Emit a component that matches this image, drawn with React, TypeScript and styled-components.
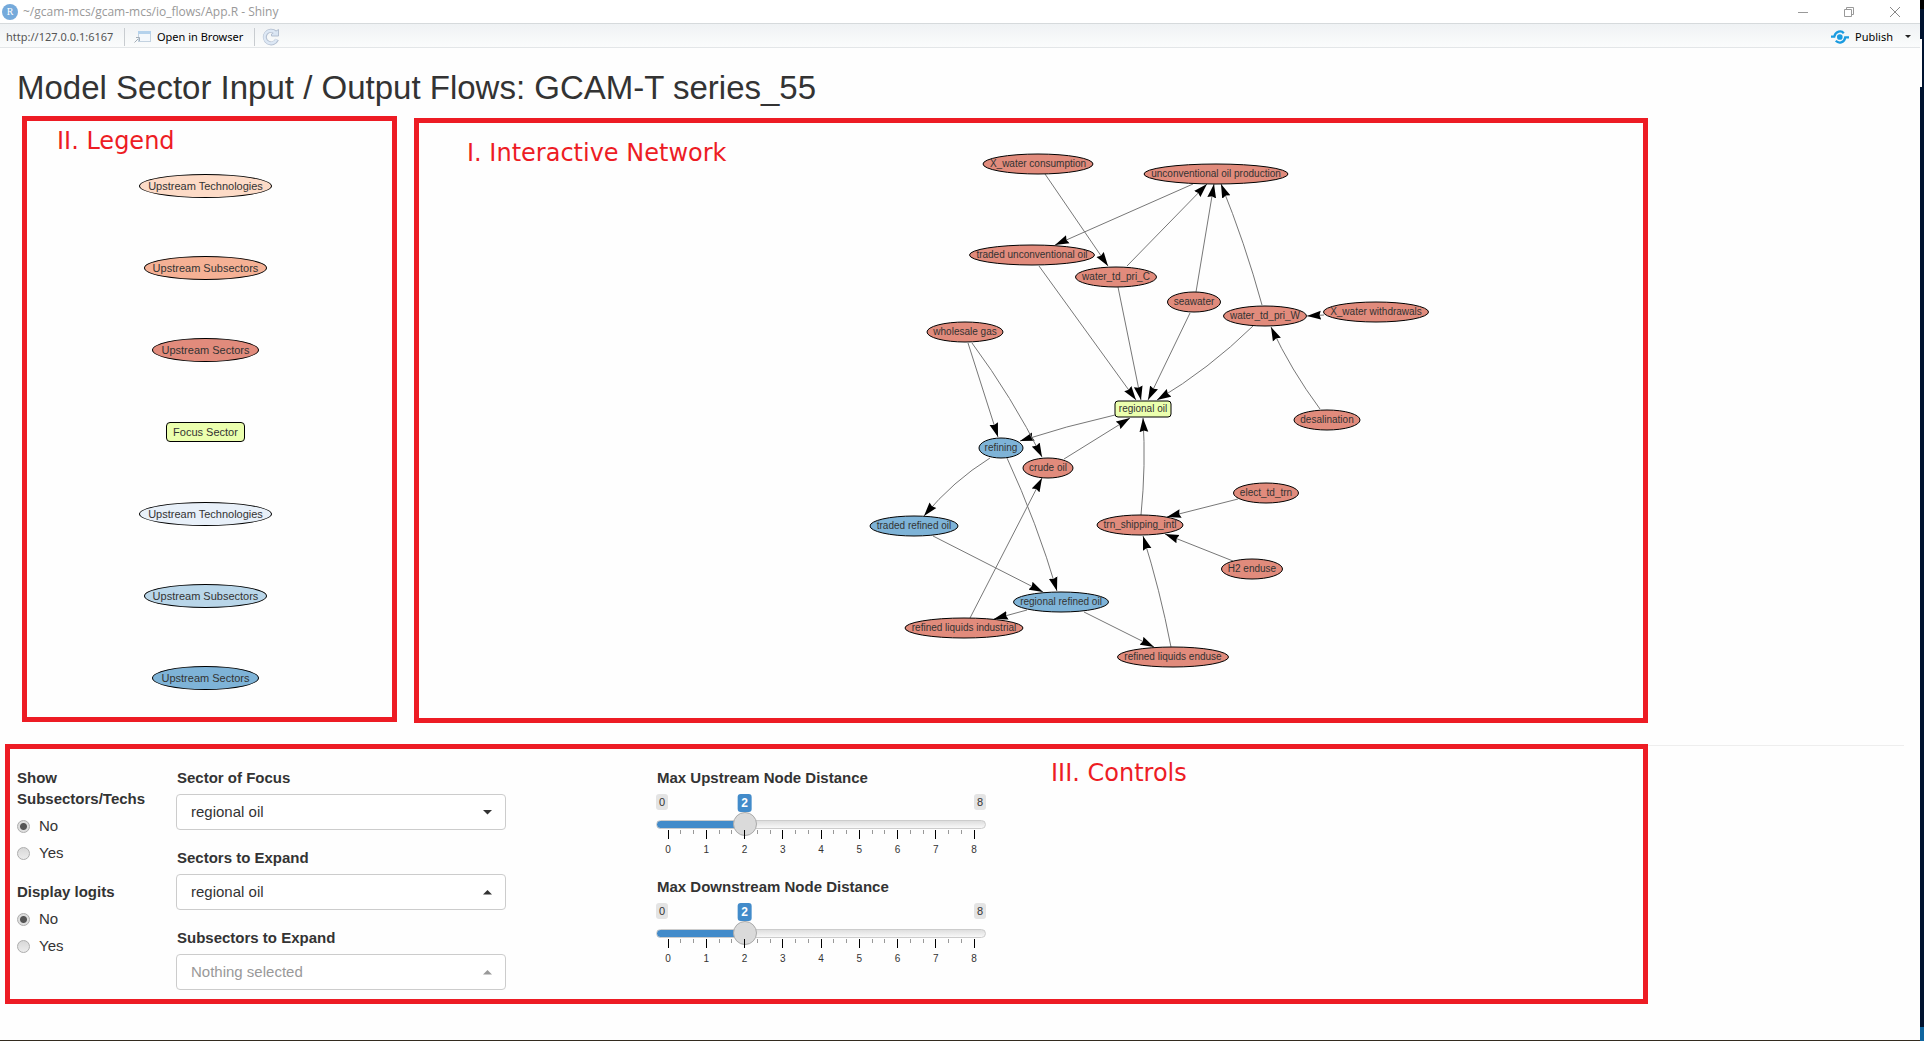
import React, { useId, useState } from "react";
import styled, { createGlobalStyle } from "styled-components";

const RED = "#ed1c24";
const SALMON = "#e18b7c";
const BLUE = "#7eb3d7";
const FOCUS = "#ebffae";

const GlobalStyle = createGlobalStyle`
  *, *::before, *::after { box-sizing: border-box; }
  body {
    margin: 0;
    background: #fefefe;
    color: #333;
    font: 15px/22px "Liberation Sans", Arial, sans-serif;
  }
  button, select, input { font: inherit; color: inherit; margin: 0; }
`;

/* ---------- window frame ---------- */

const Desktop = styled.div`
  display: grid;
  grid-template-columns: minmax(0, 1fr) 4px;
  min-height: 100vh;
`;

const Window = styled.div`
  border-bottom: 1px solid #332b1f;
`;

const DesktopEdge = styled.div`
  display: flex;
  flex-direction: column;
  background: #00132f;
`;

const EdgePart = styled.div<{ $height: number; $color: string; $narrow?: boolean }>`
  height: ${(p) => p.$height}px;
  width: ${(p) => (p.$narrow ? "2px" : "4px")};
  background: ${(p) => p.$color};
`;

const Spacer = styled.div`
  flex: 1;
`;

const TitleBar = styled.div`
  display: flex;
  align-items: center;
  height: 23px;
  padding: 0 19px 0 2px;
  gap: 5px;
  background: #fff;
  color: #999;
  font: 12px/18px "Open Sans", "Noto Sans", sans-serif;
`;

const WindowButtons = styled.div`
  display: flex;
  gap: 34px;
  height: 20px;
`;

const PlainButton = styled.button`
  display: flex;
  align-items: center;
  gap: 6px;
  padding: 0;
  border: 0;
  background: none;
`;

const Toolbar = styled.div`
  display: flex;
  align-items: center;
  height: 25px;
  padding: 2px 9px 0 6px;
  border-top: 1px solid #d6dadc;
  border-bottom: 1px solid #e3e6e8;
  background: linear-gradient(#eff2f4, #fbfcfc);
  color: #000;
  font: 11px/18px "Noto Sans", "Open Sans", sans-serif;
`;

const Address = styled.span`
  min-width: 110px;
  color: #555;
`;

const Divider = styled.span<{ $before: number; $after: number }>`
  width: 1px;
  height: 18px;
  margin: 0 ${(p) => p.$after}px 0 ${(p) => p.$before}px;
  background: #c8ccd0;
`;

const MenuArrow = styled.svg`
  margin-left: 6px;
`;

/* ---------- page ---------- */

const Heading = styled.h2`
  margin: 0;
  padding: 22px 17px 10px;
  font-size: 33px;
  line-height: 36px;
  font-weight: 400;
  white-space: nowrap;
`;

const Charts = styled.div`
  display: grid;
  grid-template-columns: minmax(0, 375fr) minmax(0, 1234fr) minmax(0, 255fr);
  column-gap: 17px;
  align-items: start;
  padding-left: 22px;
`;

const Panel = styled.section`
  border: 5px solid ${RED};
`;

const PanelTitle = styled.h3`
  margin: 0;
  color: ${RED};
  font: 400 24px/28px "DejaVu Sans", Verdana, sans-serif;
`;

const LegendPanel = styled(Panel)`
  padding: 6px 0 27px 30px;
`;

const LegendList = styled.ul`
  display: flex;
  flex-direction: column;
  align-items: center;
  gap: 58px;
  margin: 0;
  padding: 19px 38px 0 0;
  list-style: none;
`;

const LegendNode = styled.li<{ $fill: string; $box?: boolean }>`
  display: flex;
  justify-content: center;
  align-items: center;
  height: ${(p) => (p.$box ? 20 : 24)}px;
  margin: ${(p) => (p.$box ? "2px 0" : "0")};
  padding: 0 ${(p) => (p.$box ? 6 : 8)}px;
  border: 1px solid #000;
  border-radius: ${(p) => (p.$box ? "4px" : "50%")};
  background: ${(p) => p.$fill};
  font-size: 11px;
  line-height: 14px;
`;

const NetworkPanel = styled(Panel)`
  position: relative;
  margin-top: 2px;
`;

const NetworkTitle = styled(PanelTitle)`
  position: absolute;
  top: 16px;
  left: 48px;
`;

const Canvas = styled.svg`
  display: block;
  width: 100%;
  height: 595px;
  font: 10px "Liberation Sans", Arial, sans-serif;
`;

const Rule = styled.hr`
  height: 1px;
  margin: 22px 16px 0;
  border: 0;
  background: #eee;
`;

const ControlsArea = styled.div`
  display: grid;
  grid-template-columns: minmax(0, 1643fr) minmax(0, 272fr);
  margin-top: -2px;
  padding-left: 5px;
`;

const ControlsPanel = styled(Panel)`
  position: relative;
  padding: 18px 0 9px 7px;
  background: #fefefe;
`;

const ControlsTitle = styled(PanelTitle)`
  position: absolute;
  top: 10px;
  left: 1041px;
`;

const ControlColumns = styled.div`
  display: grid;
  grid-template-columns:
    159px minmax(0, 330fr) minmax(0, 150fr) minmax(0, 330fr)
    minmax(0, 657fr);
`;

const Column = styled.div`
  display: flex;
  flex-direction: column;
  gap: 17px;
`;

const SliderColumn = styled(Column)`
  grid-column: 4;
`;

const RadioSet = styled.fieldset`
  display: flex;
  flex-direction: column;
  gap: 5px;
  margin: 0;
  padding: 0 15px 0 0;
  border: 0;
`;

const RadioTitle = styled.legend`
  margin-bottom: 6px;
  padding: 0;
  font-weight: 700;
  line-height: 21px;
`;

const RadioLabel = styled.label`
  display: flex;
  align-items: center;
  gap: 9px;
`;

const Radio = styled.input`
  appearance: none;
  width: 13px;
  height: 13px;
  border: 1px solid #adadad;
  border-radius: 50%;
  background: linear-gradient(#d8d8d8, #ececec);
  &:checked {
    background: radial-gradient(circle, #555 0 3px, #dedede 4px);
  }
`;

const Field = styled.div`
  display: flex;
  flex-direction: column;
`;

const FieldLabel = styled.label`
  margin-bottom: 5px;
  padding-left: 1px;
  font-weight: 700;
`;

const SelectBox = styled.div`
  position: relative;
`;

const Select = styled.select<{ $muted?: boolean }>`
  display: block;
  appearance: none;
  width: 100%;
  height: 36px;
  padding: 0 30px 0 14px;
  border: 1px solid #ccc;
  border-radius: 4px;
  background: #fff;
  color: ${(p) => (p.$muted ? "#999" : "#333")};
`;

const Caret = styled.svg<{ $muted?: boolean }>`
  position: absolute;
  right: 14px;
  top: 16px;
  fill: ${(p) => (p.$muted ? "#999" : "#333")};
  pointer-events: none;
`;

const SliderField = styled(Field)`
  height: 92px;
`;

const SliderBadges = styled.div`
  position: relative;
  display: flex;
  justify-content: space-between;
  align-items: flex-start;
  height: 18px;
`;

const EndBadge = styled.span`
  padding: 0 3px;
  border-radius: 3px;
  background: #e4e4e4;
  font-size: 11px;
  line-height: 16px;
`;

const ValueBadge = styled.output`
  position: absolute;
  top: 0;
  padding: 0 4px;
  border-radius: 3px;
  background: #428bca;
  color: #fff;
  font-size: 12px;
  font-weight: 700;
  line-height: 18px;
  transform: translateX(-50%);
`;

const Range = styled.input`
  appearance: none;
  display: block;
  width: 100%;
  height: 25px;
  background: none;
  &::-webkit-slider-runnable-track {
    height: 9px;
    border: 1px solid #ccc;
    border-radius: 5px;
    background:
      linear-gradient(#428bca, #428bca) border-box 0 0 / var(--fill) 100% no-repeat,
      linear-gradient(#dedede, #f8f8f8);
  }
  &::-webkit-slider-thumb {
    appearance: none;
    width: 24px;
    height: 24px;
    margin-top: -9px;
    border: 1px solid #aaa;
    border-radius: 50%;
    background: #dadada;
  }
`;

const Scale = styled.div`
  display: flex;
  justify-content: space-between;
  margin-top: -7px;
  padding: 0 12px;
`;

const Tick = styled.span<{ $big: boolean }>`
  display: flex;
  flex-direction: column;
  align-items: center;
  width: 0;
  font-size: 10px;
  line-height: 12px;
  &::before {
    content: "";
    flex: none;
    width: 1px;
    height: ${(p) => (p.$big ? 9 : 4)}px;
    margin-bottom: 5px;
    background: ${(p) => (p.$big ? "#000" : "#999")};
  }
`;

/* ---------- data ---------- */

const legendNodes = [
  { label: "Upstream Technologies", fill: "#fddbc7" },
  { label: "Upstream Subsectors", fill: "#f5b195" },
  { label: "Upstream Sectors", fill: SALMON },
  { label: "Focus Sector", fill: FOCUS, box: true },
  { label: "Upstream Technologies", fill: "#e8f0f9" },
  { label: "Upstream Subsectors", fill: "#b9d6e9" },
  { label: "Upstream Sectors", fill: BLUE },
];

type NetNode = [label: string, x: number, y: number, width: number, fill: string];

const netNodes: NetNode[] = [
  ["X_water consumption", 1038, 164, 110, SALMON],
  ["unconventional oil production", 1216, 174, 144, SALMON],
  ["traded unconventional oil", 1032, 255, 125, SALMON],
  ["water_td_pri_C", 1116, 277, 81, SALMON],
  ["seawater", 1194, 302, 53, SALMON],
  ["water_td_pri_W", 1265, 316, 83, SALMON],
  ["X_water withdrawals", 1376, 312, 105, SALMON],
  ["desalination", 1327, 420, 66, SALMON],
  ["wholesale gas", 965, 332, 76, SALMON],
  ["refining", 1001, 448, 44, BLUE],
  ["crude oil", 1048, 468, 50, SALMON],
  ["traded refined oil", 914, 526, 88, BLUE],
  ["regional refined oil", 1061, 602, 95, BLUE],
  ["refined liquids industrial", 964, 628, 118, SALMON],
  ["trn_shipping_intl", 1140, 525, 86, SALMON],
  ["elect_td_trn", 1266, 493, 65, SALMON],
  ["H2 enduse", 1252, 569, 61, SALMON],
  ["refined liquids enduse", 1173, 657, 111, SALMON],
];

const edges = [
  "M1045 174 L1108 266",
  "M1193 184 L1055 245",
  "M1127 266 L1207 184",
  "M1196 292 L1214 184",
  "M1262 305 Q1245 243 1221 184",
  "M1324 315 L1307 316",
  "M1320 409 Q1291 370 1271 327",
  "M1190 313 L1148 400",
  "M1253 326 Q1209 369 1157 400",
  "M1118 287 L1141 400",
  "M1039 266 L1136 400",
  "M1115 415 Q1066 426 1020 441",
  "M1064 459 L1130 418",
  "M968 343 L998 437",
  "M972 343 Q1012 397 1042 457",
  "M990 458 Q953 481 924 516",
  "M1007 458 Q1037 523 1057 591",
  "M933 536 L1043 592",
  "M1027 610 L994 619",
  "M970 618 L1042 478",
  "M1084 612 L1154 647",
  "M1171 647 Q1160 590 1143 536",
  "M1141 515 Q1146 465 1143 418",
  "M1238 499 L1167 517",
  "M1233 561 L1165 534",
];

/* ---------- parts ---------- */

function Network() {
  return (
    <Canvas viewBox="419 123 1224 595" role="img" aria-label="Sector flow network">
      <defs>
        <marker
          id="arrow"
          markerUnits="userSpaceOnUse"
          markerWidth="14"
          markerHeight="10"
          refX="14"
          refY="5"
          orient="auto"
        >
          <path d="M14 5 L0 0.6 L1.5 5 L0 9.4 Z" fill="#000" />
        </marker>
      </defs>
      {edges.map((d) => (
        <path key={d} d={d} fill="none" stroke="#777" strokeWidth="1" markerEnd="url(#arrow)" />
      ))}
      {netNodes.map(([label, x, y, width, fill]) => (
        <g key={label}>
          <ellipse cx={x} cy={y} rx={width / 2} ry="10" fill={fill} stroke="#000" />
          <text x={x} y={y + 3} textAnchor="middle" fill="#333">
            {label}
          </text>
        </g>
      ))}
      <rect x="1115" y="401" width="56" height="16" rx="3" fill={FOCUS} stroke="#000" />
      <text x="1143" y="412" textAnchor="middle" fill="#333">
        regional oil
      </text>
    </Canvas>
  );
}

function RadioGroup({ title }: { title: string }) {
  const [value, setValue] = useState("No");
  const name = useId();
  return (
    <RadioSet>
      <RadioTitle>{title}</RadioTitle>
      {["No", "Yes"].map((option) => (
        <RadioLabel key={option}>
          <Radio
            type="radio"
            name={name}
            checked={value === option}
            onChange={() => setValue(option)}
          />
          {option}
        </RadioLabel>
      ))}
    </RadioSet>
  );
}

function SelectField(props: { label: string; value: string; up?: boolean; muted?: boolean }) {
  const id = useId();
  return (
    <Field>
      <FieldLabel htmlFor={id}>{props.label}</FieldLabel>
      <SelectBox>
        <Select id={id} $muted={props.muted}>
          <option>{props.value}</option>
        </Select>
        <Caret width="9" height="5" viewBox="0 0 9 5" $muted={props.muted}>
          <path d={props.up ? "M0 4.5 L4.5 0 L9 4.5 Z" : "M0 0 L9 0 L4.5 4.5 Z"} />
        </Caret>
      </SelectBox>
    </Field>
  );
}

function Slider({ label }: { label: string }) {
  const id = useId();
  const [value, setValue] = useState(2);
  const place = `calc(12px + (100% - 24px) * ${value / 8})`;
  return (
    <SliderField>
      <FieldLabel htmlFor={id}>{label}</FieldLabel>
      <SliderBadges>
        <EndBadge>0</EndBadge>
        <EndBadge>8</EndBadge>
        <ValueBadge htmlFor={id} style={{ left: place }}>
          {value}
        </ValueBadge>
      </SliderBadges>
      <Range
        id={id}
        type="range"
        min={0}
        max={8}
        value={value}
        onChange={(e) => setValue(Number(e.target.value))}
        style={{ "--fill": place } as React.CSSProperties}
      />
      <Scale aria-hidden="true">
        {Array.from({ length: 25 }, (_, i) => (
          <Tick key={i} $big={i % 3 === 0}>
            {i % 3 === 0 ? i / 3 : null}
          </Tick>
        ))}
      </Scale>
    </SliderField>
  );
}

function Controls() {
  return (
    <ControlsPanel>
      <ControlsTitle>III. Controls</ControlsTitle>
      <ControlColumns>
        <Column>
          <RadioGroup title="Show Subsectors/Techs" />
          <RadioGroup title="Display logits" />
        </Column>
        <Column>
          <SelectField label="Sector of Focus" value="regional oil" />
          <SelectField label="Sectors to Expand" value="regional oil" up />
          <SelectField label="Subsectors to Expand" value="Nothing selected" up muted />
        </Column>
        <SliderColumn>
          <Slider label="Max Upstream Node Distance" />
          <Slider label="Max Downstream Node Distance" />
        </SliderColumn>
      </ControlColumns>
    </ControlsPanel>
  );
}

export default function App() {
  return (
    <Desktop>
      <GlobalStyle />
      <Window>
        <TitleBar>
          <svg width="16" height="16" viewBox="0 0 16 16">
            <circle cx="8" cy="8" r="8" fill="#75aadb" />
            <text x="8" y="11" textAnchor="middle" fill="#fff" fontSize="10" fontFamily="Liberation Serif, serif">
              R
            </text>
          </svg>
          <span>~/gcam-mcs/gcam-mcs/io_flows/App.R - Shiny</span>
          <Spacer />
          <WindowButtons>
            <PlainButton aria-label="Minimize">
              <svg width="12" height="12" viewBox="0 0 12 12" stroke="#999" fill="none">
                <path d="M1 6.5 H11" />
              </svg>
            </PlainButton>
            <PlainButton aria-label="Restore">
              <svg width="12" height="12" viewBox="0 0 12 12" stroke="#999" fill="none">
                <path d="M1.500 3.500 H8.500 V10.500 H1.500 Z M3.500 3.500 V1.500 H10.500 V8.500 H8.500" />
              </svg>
            </PlainButton>
            <PlainButton aria-label="Close">
              <svg width="12" height="12" viewBox="0 0 12 12" stroke="#888" fill="none">
                <path d="M1 1 L11 11 M11 1 L1 11" />
              </svg>
            </PlainButton>
          </WindowButtons>
        </TitleBar>
        <Toolbar>
          <Address>http://127.0.0.1:6167</Address>
          <Divider $before={8} $after={9} />
          <PlainButton>
            <svg width="17" height="14" viewBox="0 0 17 14">
              <rect x="4.500" y="1.500" width="12" height="10" fill="#f4f8fc" stroke="#c3d2e0" />
              <rect x="4" y="1" width="13" height="3" fill="#b5d2ec" />
              <path d="M0.500 12.500 L4 9 M2 7.500 H5.500 V11" fill="none" stroke="#a3adb7" />
            </svg>
            Open in Browser
          </PlainButton>
          <Divider $before={11} $after={7} />
          <PlainButton aria-label="Reload">
            <svg width="18" height="18" viewBox="0 0 18 18" fill="none">
              <path d="M13.500 4.500 A6.300 6.300 0 1 0 15 11.500" stroke="#b3bfd0" strokeWidth="4" />
              <path d="M16.500 1.500 V8 H9.500 V6 Z" fill="#d9e5f3" stroke="#b3bfd0" />
              <path d="M13.500 4.800 A6.300 6.300 0 1 0 14.600 11.500" stroke="#dde8f5" strokeWidth="2.400" />
            </svg>
          </PlainButton>
          <Spacer />
          <PlainButton>
            <svg width="18" height="14" viewBox="0 0 19 14" fill="none" stroke="#1a9be0">
              <path d="M0 6.500 H3.500 C5 0.500 11 0 13.500 3" strokeWidth="2.400" />
              <path d="M19 7.500 H15 C14 13.500 8 14 5 11" strokeWidth="2.400" />
              <circle cx="9.300" cy="7" r="3" fill="#1a9be0" stroke="none" />
            </svg>
            Publish
            <MenuArrow width="6" height="3" viewBox="0 0 6 3">
              <path d="M0 0 H6 L3 3 Z" fill="#222" />
            </MenuArrow>
          </PlainButton>
        </Toolbar>

        <main>
          <Heading>Model Sector Input / Output Flows: GCAM-T series_55</Heading>
          <Charts>
            <LegendPanel>
              <PanelTitle>II. Legend</PanelTitle>
              <LegendList>
                {legendNodes.map((n, i) => (
                  <LegendNode key={i} $fill={n.fill} $box={n.box}>
                    {n.label}
                  </LegendNode>
                ))}
              </LegendList>
            </LegendPanel>
            <NetworkPanel>
              <NetworkTitle>I. Interactive Network</NetworkTitle>
              <Network />
            </NetworkPanel>
          </Charts>
          <Rule />
          <ControlsArea>
            <Controls />
          </ControlsArea>
        </main>
      </Window>
      <DesktopEdge>
        <EdgePart $height={9} $color="#000" />
        <EdgePart $height={30} $color="#00132f" />
        <EdgePart $height={48} $color="#fefefe" $narrow />
        <Spacer />
        <EdgePart $height={14} $color="#0f659f" />
      </DesktopEdge>
    </Desktop>
  );
}
